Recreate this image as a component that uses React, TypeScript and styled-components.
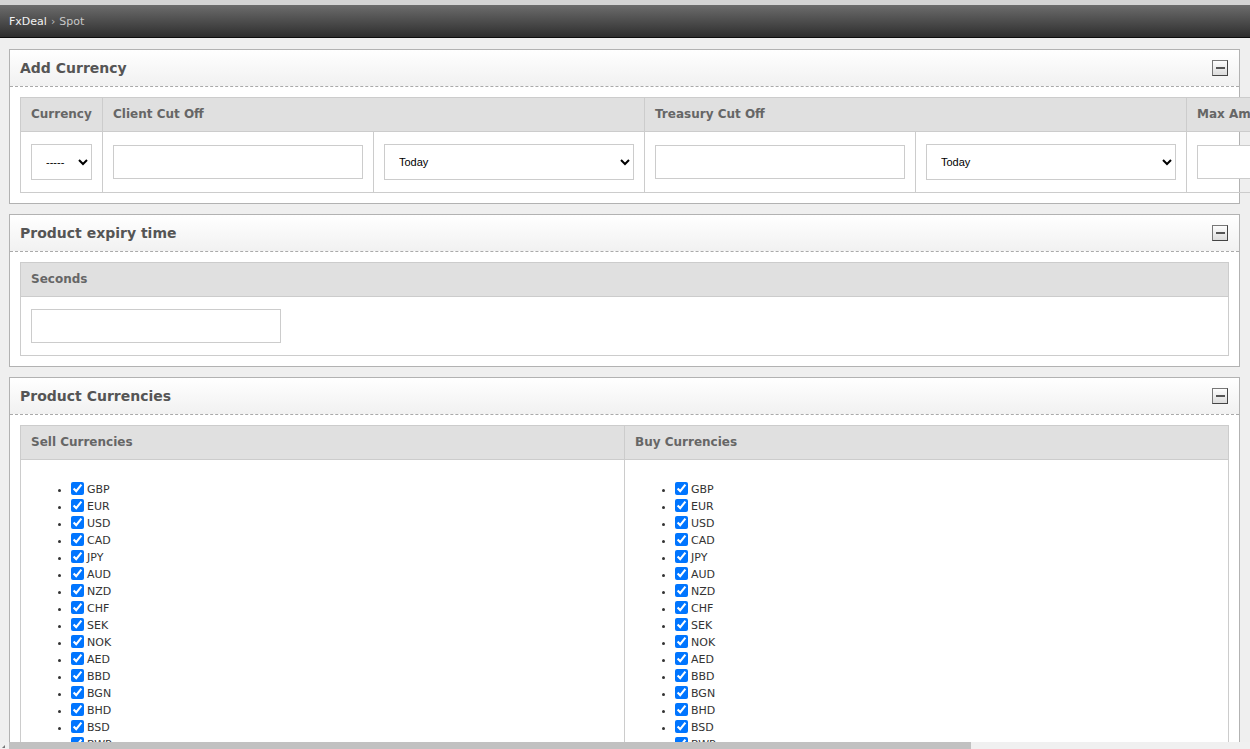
import React from 'react'
import styled, { createGlobalStyle } from 'styled-components'

const currencies = [
  'GBP', 'EUR', 'USD', 'CAD', 'JPY', 'AUD', 'NZD', 'CHF', 'SEK', 'NOK',
  'AED', 'BBD', 'BGN', 'BHD', 'BSD', 'BWP', 'CNY', 'CZK', 'DKK', 'HKD',
]

const GlobalStyle = createGlobalStyle`
  html, body {
    margin: 0;
    padding: 0;
    overflow: hidden;
    background: #efefef;
    font-family: "DejaVu Sans", Verdana, sans-serif;
  }
`

// collapse / expand toggle in a panel header
const Toggle = () => (
  <ToggleBox type="button" aria-label="collapse">
    <svg width="9" height="2" viewBox="0 0 9 2">
      <rect x="0" y="0" width="9" height="2" fill="#555" />
    </svg>
  </ToggleBox>
)

const Panel = ({ title, children }: { title: string; children: React.ReactNode }) => (
  <PanelBox>
    <PanelHead>
      <PanelTitle>{title}</PanelTitle>
      <Toggle />
    </PanelHead>
    <PanelBody>{children}</PanelBody>
  </PanelBox>
)

const CurrencyList = () => (
  <List>
    {currencies.map((c) => (
      <Item key={c}>
        <input type="checkbox" defaultChecked />
        {c}
      </Item>
    ))}
  </List>
)

export default function App() {
  return (
    <Page>
      <GlobalStyle />
      <TopStrip />
      <Header>
        <Crumb>FxDeal</Crumb>
        <CrumbSep>›</CrumbSep>
        <CrumbCurrent>Spot</CrumbCurrent>
      </Header>

      <Content>
        {/* Add Currency */}
        <Panel title="Add Currency">
          <Table>
            <thead>
              <tr>
                <Th>Currency</Th>
                <Th colSpan={2}>Client Cut Off</Th>
                <Th colSpan={2}>Treasury Cut Off</Th>
                <Th>Max Amount</Th>
                <Th>Action</Th>
              </tr>
            </thead>
            <tbody>
              <tr>
                <Td>
                  <Select $width={61}>
                    <option>-----</option>
                  </Select>
                </Td>
                <Td>
                  <TextInput />
                </Td>
                <Td>
                  <Select $width={250}>
                    <option>Today</option>
                    <option>Tomorrow</option>
                  </Select>
                </Td>
                <Td>
                  <TextInput />
                </Td>
                <Td>
                  <Select $width={250}>
                    <option>Today</option>
                    <option>Tomorrow</option>
                  </Select>
                </Td>
                <Td>
                  <TextInput />
                </Td>
                <Td>
                  <AddButton type="button">Add</AddButton>
                </Td>
              </tr>
            </tbody>
          </Table>
        </Panel>

        {/* Product expiry time */}
        <Panel title="Product expiry time">
          <Table $full>
            <thead>
              <tr>
                <Th>Seconds</Th>
              </tr>
            </thead>
            <tbody>
              <tr>
                <Td>
                  <TextInput />
                </Td>
              </tr>
            </tbody>
          </Table>
        </Panel>

        {/* Product Currencies */}
        <Panel title="Product Currencies">
          <Table $full $fixed>
            <thead>
              <tr>
                <Th>Sell Currencies</Th>
                <Th>Buy Currencies</Th>
              </tr>
            </thead>
            <tbody>
              <tr>
                <ListCell>
                  <CurrencyList />
                </ListCell>
                <ListCell>
                  <CurrencyList />
                </ListCell>
              </tr>
            </tbody>
          </Table>
        </Panel>
      </Content>

      {/* page horizontal scrollbar */}
      <ScrollBar>
        <ScrollArrow />
        <ScrollThumb style={{ width: 962 }} />
      </ScrollBar>
    </Page>
  )
}

const Page = styled.div`
  display: flex;
  flex-direction: column;
  width: 1250px;
  height: 749px;
  background: #efefef;
`

const TopStrip = styled.div`
  height: 5px;
  flex-shrink: 0;
  background: #d4d4d4;
`

const Header = styled.div`
  display: flex;
  align-items: center;
  gap: 4px;
  height: 33px;
  flex-shrink: 0;
  padding: 1px 9px 0;
  box-sizing: border-box;
  background: linear-gradient(#6c6c6c, #2e2e2e);
  border-bottom: 1px solid #0e0e0e;
  font-size: 11px;
`

const Crumb = styled.span`
  color: #f2f2f2;
`

const CrumbSep = styled.span`
  color: #bbb;
`

const CrumbCurrent = styled.span`
  color: #c8c8c8;
`

const Content = styled.div`
  flex: 1;
  min-height: 0;
  padding: 11px 10px 0 9px;
  overflow: hidden;
`

const ScrollBar = styled.div`
  display: flex;
  height: 7px;
  flex-shrink: 0;
  background: #f0f0f0;
`

const ScrollArrow = styled.div`
  width: 9px;
  position: relative;

  &::after {
    content: '';
    position: absolute;
    left: 2px;
    bottom: 1px;
    border-left: 3px solid transparent;
    border-bottom: 3px solid #777;
  }
`

const ScrollThumb = styled.div`
  height: 7px;
  background: #c1c1c1;
`

const PanelBox = styled.section`
  width: 1229px;
  margin-bottom: 10.5px;
  background: #fff;
  border: 1px solid #b2b2b2;
`

const PanelHead = styled.div`
  display: flex;
  align-items: center;
  justify-content: space-between;
  height: 35.5px;
  padding: 0 10px;
  background: linear-gradient(#ffffff, #f1f1f1);
  border-bottom: 1px dashed #aaa;
`

const PanelTitle = styled.h2`
  margin: 0;
  font-size: 14px;
  font-weight: bold;
  color: #555;
`

const ToggleBox = styled.button`
  display: flex;
  align-items: center;
  justify-content: center;
  width: 16px;
  height: 16px;
  padding: 0;
  margin-right: 1px;
  background: linear-gradient(#fdfdfd, #dcdcdc);
  border: 1px solid #777;
  border-right-color: #444;
  border-bottom-color: #444;
  cursor: pointer;
`

const PanelBody = styled.div`
  padding: 10px;
`

const Table = styled.table<{ $full?: boolean; $fixed?: boolean }>`
  border-collapse: collapse;
  width: ${(p) => (p.$full ? '100%' : 'auto')};
  table-layout: ${(p) => (p.$fixed ? 'fixed' : 'auto')};
  white-space: nowrap;
`

const Th = styled.th`
  height: 13px;
  padding: 9px 10px 10px;
  line-height: 14px;
  text-align: left;
  font-size: 12px;
  font-weight: bold;
  color: #666;
  background: #e0e0e0;
  border: 1px solid #ccc;
`

const Td = styled.td`
  padding: 12px 10px;
  vertical-align: middle;
  border: 1px solid #ccc;
`

const ListCell = styled(Td)`
  padding: 10px;
  vertical-align: top;
`

const TextInput = styled.input.attrs({ type: 'text' })`
  display: block;
  box-sizing: border-box;
  width: 250px;
  height: 34px;
  margin: 0;
  padding: 4px 8px;
  border: 1px solid #ccc;
  background: #fff;
  font-family: "Liberation Sans", Arial, sans-serif;
  font-size: 11px;
`

const Select = styled.select<{ $width: number }>`
  display: block;
  box-sizing: border-box;
  width: ${(p) => p.$width}px;
  height: 36px;
  margin: 0;
  padding: 0 8px 0 10px;
  border: 1px solid #ccc;
  border-radius: 0;
  background: #fff;
  color: #000;
  font-family: "Liberation Sans", Arial, sans-serif;
  font-size: 11px;
`

const AddButton = styled.button`
  height: 34px;
  padding: 0 24px;
  border: 1px solid #aaa;
  background: linear-gradient(#fff, #e2e2e2);
  font-family: "DejaVu Sans", Verdana, sans-serif;
  font-size: 12px;
  color: #444;
`

const List = styled.ul`
  margin: 11px 0;
  padding-left: 40px;
  font-size: 11px;
  color: #333;
`

const Item = styled.li`
  height: 17px;
  line-height: 17px;

  input {
    width: 13px;
    height: 13px;
    margin: 0 3px 0 0;
    vertical-align: -2px;
  }
`
